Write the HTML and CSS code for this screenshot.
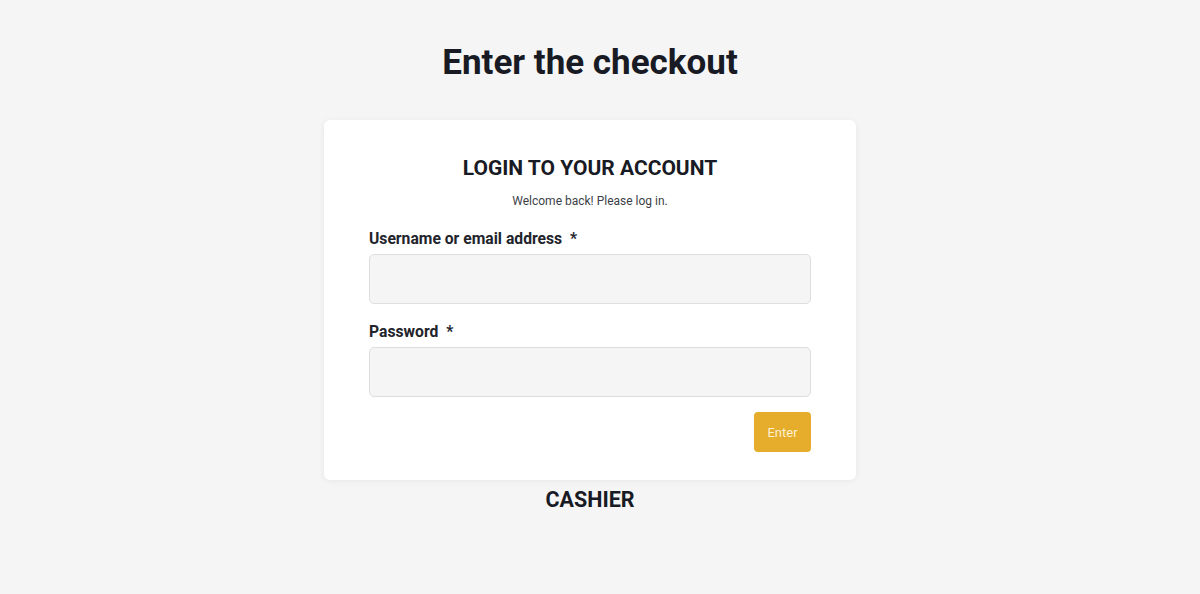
FILE: index.html
```html
<!DOCTYPE html>
<html lang="en">
<head>
<meta charset="utf-8">
<title>Enter the checkout</title>
<link rel="stylesheet" href="styles.css">
</head>
<body>
<main class="page">
  <h1 class="page-title">Enter the checkout</h1>
  <section class="card">
    <h2 class="card-title">LOGIN TO YOUR ACCOUNT</h2>
    <p class="card-sub">Welcome back! Please log in.</p>
    <form class="form">
      <div class="field">
        <label class="label" for="user">Username or email address <span class="req">*</span></label>
        <input class="input" id="user" type="text">
      </div>
      <div class="field">
        <label class="label" for="pass">Password <span class="req">*</span></label>
        <input class="input" id="pass" type="password">
      </div>
      <div class="actions">
        <button class="btn" type="button">Enter</button>
      </div>
    </form>
  </section>
  <div class="footer-title">CASHIER</div>
</main>
</body>
</html>
```
FILE: styles.css
```css
* { box-sizing: border-box; }
html, body { margin: 0; padding: 0; }
body {
  background: #f5f5f5;
  font-family: Roboto, "Liberation Sans", Arial, sans-serif;
  color: #1a1b25;
}
.page {
  width: 1180px;
  display: flex;
  flex-direction: column;
  align-items: center;
  padding-top: 41px;
}
.page-title {
  margin: 0;
  font-size: 35px;
  font-weight: 700;
  line-height: 44px;
  color: #181a24;
}
.card {
  margin-top: 35px;
  width: 532px;
  background: #fff;
  border-radius: 6px;
  box-shadow: 0 1px 6px rgba(0,0,0,0.06);
  padding: 34px 45px 28px;
  display: flex;
  flex-direction: column;
}
.card-title {
  margin: 0;
  text-align: center;
  font-size: 21px;
  font-weight: 700;
  line-height: 28px;
  color: #181a24;
}
.card-sub {
  margin: 11px 0 0;
  text-align: center;
  font-size: 12px;
  line-height: 16px;
  color: #3c3f48;
}
.form {
  margin-top: 19px;
  display: flex;
  flex-direction: column;
}
.field {
  display: flex;
  flex-direction: column;
}
.field + .field { margin-top: 17px; }
.label {
  font-size: 15.7px;
  font-weight: 700;
  line-height: 22px;
  color: #22242c;
  margin-bottom: 4px;
}
.req { margin-left: 4px; }
.input {
  height: 50px;
  background: #f5f5f5;
  border: 1px solid #dedede;
  border-radius: 5px;
  font: inherit;
  padding: 0 14px;
}
.actions {
  margin-top: 15px;
  display: flex;
  justify-content: flex-end;
}
.btn {
  width: 57px;
  height: 40px;
  background: #e6ad2c;
  border: none;
  border-radius: 4px;
  color: #fdf1cf;
  font-family: Roboto, "Liberation Sans", Arial, sans-serif;
  font-size: 13px;
  padding: 0;
}
.footer-title {
  margin-top: 6px;
  font-size: 21.5px;
  font-weight: 700;
  line-height: 28px;
  color: #181a24;
}
```
